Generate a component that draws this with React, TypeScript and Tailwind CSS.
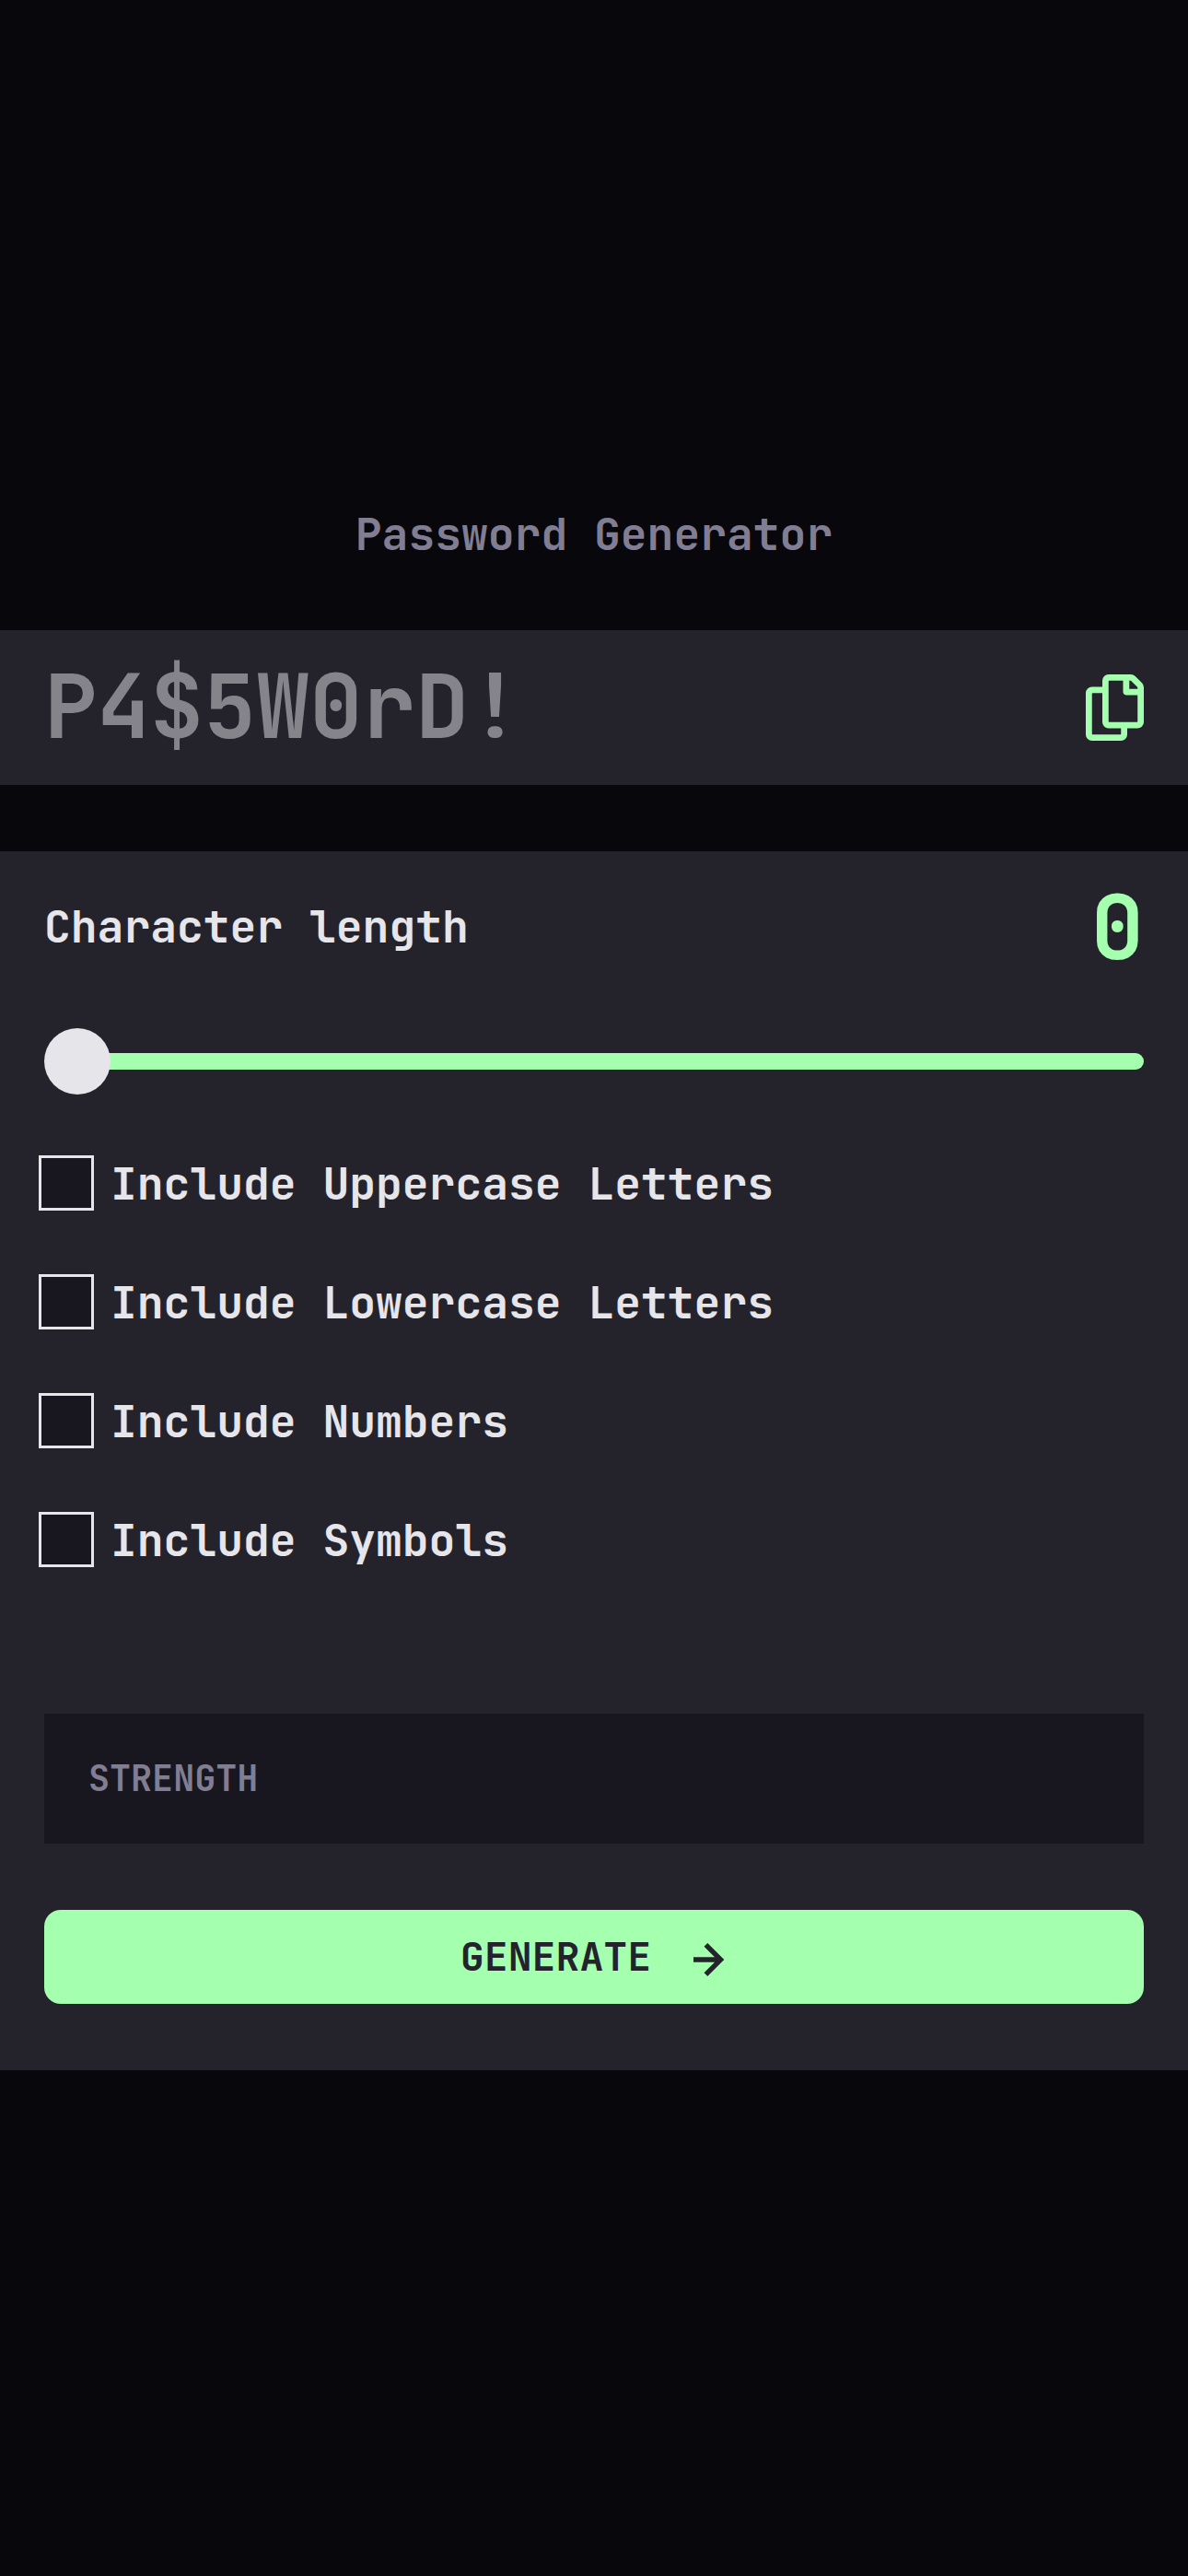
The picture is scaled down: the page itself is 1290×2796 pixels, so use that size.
import { useState } from "react";

const OPTIONS = [
  "Include Uppercase Letters",
  "Include Lowercase Letters",
  "Include Numbers",
  "Include Symbols",
];

function CopyIcon() {
  return (
    <svg viewBox="0 0 21 24" className="h-[72px] w-[63px] fill-[#a4ffaf]">
      <path d="M20.341 3.091 17.909.659A2.25 2.25 0 0 0 16.319 0H8.25A2.25 2.25 0 0 0 6 2.25V4.5H2.25A2.25 2.25 0 0 0 0 6.75v15A2.25 2.25 0 0 0 2.25 24h10.5A2.25 2.25 0 0 0 15 21.75V19.5h3.75A2.25 2.25 0 0 0 21 17.25V4.682a2.25 2.25 0 0 0-.659-1.591ZM12.469 21.75H2.53a.281.281 0 0 1-.281-.281V7.03a.281.281 0 0 1 .281-.281H6v10.5a2.25 2.25 0 0 0 2.25 2.25h4.5v1.969a.282.282 0 0 1-.281.281Zm6-4.5H8.53a.281.281 0 0 1-.281-.281V2.53a.281.281 0 0 1 .281-.281H13.5v4.125c0 .621.504 1.125 1.125 1.125h4.125v9.469a.281.281 0 0 1-.281.281Zm.281-12h-3v-3h.451c.075 0 .147.03.2.082L18.667 4.6a.281.281 0 0 1 .082.199v.451Z" />
    </svg>
  );
}

function ArrowIcon() {
  return (
    <svg viewBox="0 0 12 12" className="mt-[6px] size-[36px] fill-[#24232c]">
      <path d="m5.106 12 6-6-6-6-1.265 1.265 3.841 3.84H.001v1.79h7.681l-3.841 3.84z" />
    </svg>
  );
}

export default function App() {
  const [checked, setChecked] = useState<string[]>([]);
  const toggle = (name: string) =>
    setChecked((list) => (list.includes(name) ? list.filter((n) => n !== name) : [...list, name]));

  return (
    <main className="h-[2796px] w-full bg-[#08070b] pt-[548px] font-['JetBrains_Mono','DejaVu_Sans_Mono',monospace] text-[48px] font-bold text-[#e6e5ea]">
      <h1 className="text-center leading-[64px] text-[#817d92]">Password Generator</h1>

      <section className="mt-[72px] flex h-[168px] items-center justify-between bg-[#24232c] px-[48px]">
        <span className="pb-[3px] text-[96px] leading-none text-[#85848b]">P4$5W0rD!</span>
        <button aria-label="Copy">
          <CopyIcon />
        </button>
      </section>

      <section className="mt-[72px] flex h-[1323px] flex-col bg-[#24232c] px-[48px] pt-[18px]">
        <div className="flex h-[128px] items-center justify-between">
          <span className="leading-[128px]">Character length</span>
          <span className="pt-[2px] text-[96px] leading-[126px] text-[#a4ffaf]">0</span>
        </div>

        <div className="mt-[46px] flex h-[72px] items-center">
          <div className="z-10 size-[72px] shrink-0 rounded-full bg-[#e6e5ea]" />
          <div className="-ml-[4px] h-[18px] grow rounded-r-full bg-[#a4ffaf]" />
        </div>

        <div className="-ml-[6px] mt-[66px] flex flex-col gap-[69px]">
          {OPTIONS.map((name) => (
            <label key={name} className="flex h-[60px] items-center gap-[18px]">
              <input
                type="checkbox"
                checked={checked.includes(name)}
                onChange={() => toggle(name)}
                className="size-[60px] appearance-none border-[3px] border-[#e6e5ea] bg-[#18171f] checked:bg-[#a4ffaf]"
              />
              <span className="pt-[2px] leading-[60px]">{name}</span>
            </label>
          ))}
        </div>

        <div className="mt-[159px] flex h-[141px] items-center bg-[#18171f] px-[48px] text-[38.4px] text-[#817d92]">
          STRENGTH
        </div>

        <button className="mt-[72px] flex h-[102px] items-center justify-center gap-[46px] rounded-[18px] bg-[#a4ffaf] pr-[1px] text-[43.2px] text-[#24232c]">
          GENERATE
          <ArrowIcon />
        </button>
      </section>
    </main>
  );
}
